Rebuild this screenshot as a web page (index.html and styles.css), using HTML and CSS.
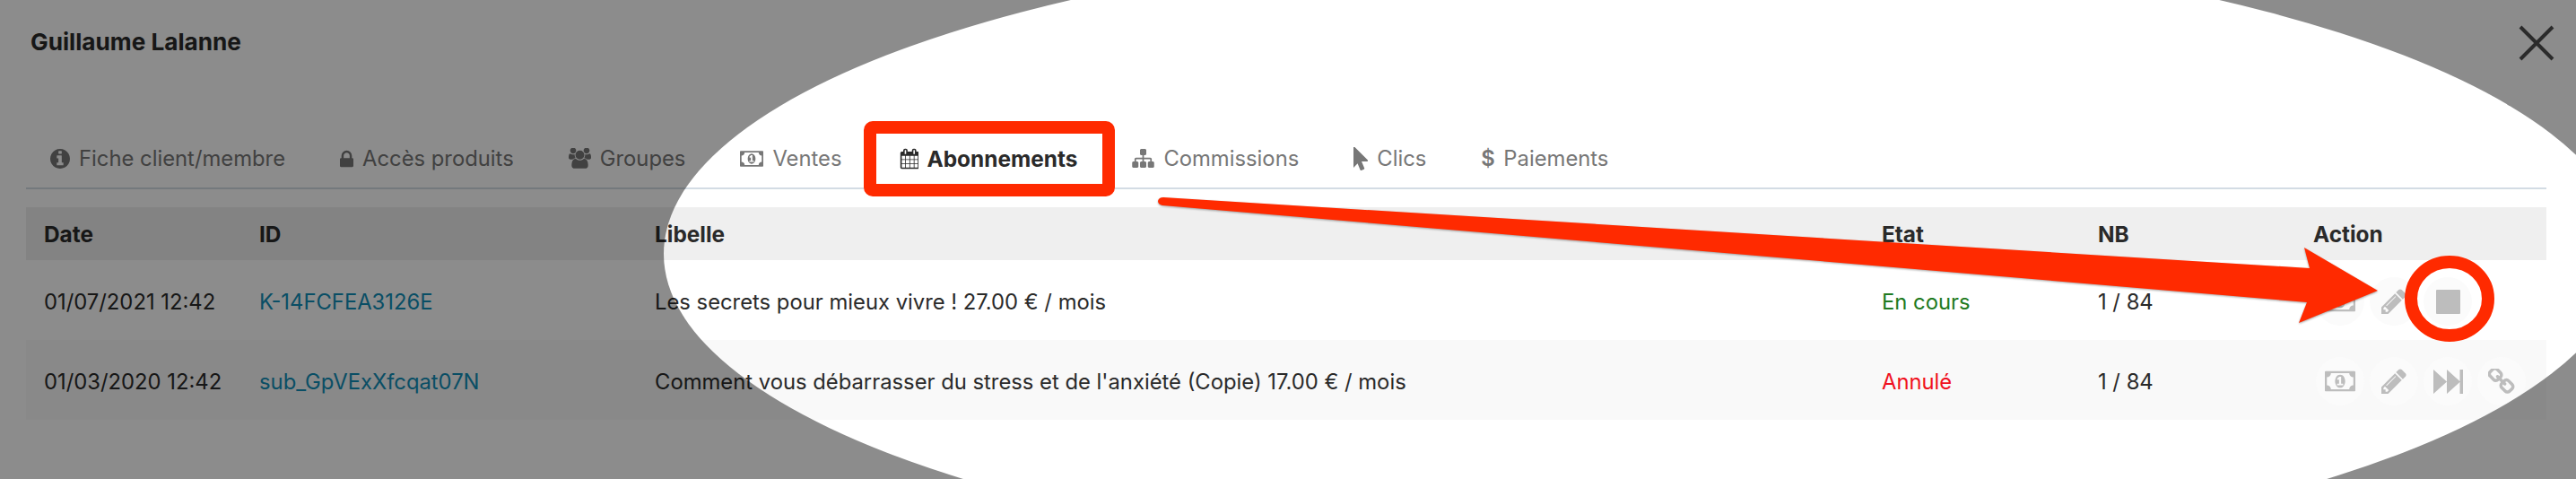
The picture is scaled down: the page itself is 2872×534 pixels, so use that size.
FILE: index.html
```html
<!DOCTYPE html>
<html lang="fr">
<head>
    <meta charset="UTF-8">
    <title>Guillaume Lalanne - Abonnements</title>
    <link rel="stylesheet" href="styles.css">
</head>
<body>
<div class="page">

    <svg class="sprites" aria-hidden="true">
        <symbol id="i-info" viewBox="128 128 1536 1536"><path d="M1152 1376v-160q0-14-9-23t-23-9h-96v-512q0-14-9-23t-23-9h-320q-14 0-23 9t-9 23v160q0 14 9 23t23 9h96v320h-96q-14 0-23 9t-9 23v160q0 14 9 23t23 9h448q14 0 23-9t9-23zm-128-896v-160q0-14-9-23t-23-9h-192q-14 0-23 9t-9 23v160q0 14 9 23t23 9h192q14 0 23-9t9-23zm640 416q0 209-103 385.500t-279.500 279.500-385.500 103-385.500-103-279.500-279.500-103-385.500 103-385.500 279.500-279.500 385.500-103 385.500 103 279.500 279.500 103 385.500z"/></symbol>
        <symbol id="i-lock" viewBox="320 128 1152 1408"><path d="M640 768h512v-192q0-106-75-181t-181-75-181 75-75 181v192zm832 96v576q0 40-28 68t-68 28h-960q-40 0-68-28t-28-68v-576q0-40 28-68t68-28h32v-192q0-184 132-316t316-132 316 132 132 316v192h32q40 0 68 28t28 68z"/></symbol>
        <symbol id="i-users" viewBox="0 128 1920 1664"><path d="M593 896q-162 5-265 128h-134q-82 0-138-40.500t-56-118.500q0-353 124-353 6 0 43.500 21t97.500 42.500 119 21.500q67 0 133-23-5 37-5 66 0 139 81 256zm1071 637q0 120-73 189.500t-194 69.500h-874q-121 0-194-69.500t-73-189.500q0-53 3.500-103.500t14-109 26.500-108.500 43-97.500 62-81 85.500-53.500 111.500-20q10 0 43 21.500t73 48 107 48 135 21.500 135-21.500 107-48 73-48 43-21.500q61 0 111.500 20t85.500 53.500 62 81 43 97.500 26.500 108.500 14 109 3.500 103.500zm-1024-1277q0 106-75 181t-181 75-181-75-75-181 75-181 181-75 181 75 75 181zm704 384q0 159-112.500 271.500t-271.500 112.500-271.500-112.500-112.500-271.500 112.500-271.500 271.500-112.500 271.500 112.500 112.500 271.500zm576 225q0 78-56 118.500t-138 40.500h-134q-103-123-265-128 81-117 81-256 0-29-5-66 66 23 133 23 59 0 119-21.500t97.500-42.500 43.500-21q124 0 124 353zm-128-609q0 106-75 181t-181 75-181-75-75-181 75-181 181-75 181 75 75 181z"/></symbol>
        <symbol id="i-money" viewBox="0 256 1920 1280"><path d="M768 1152h384v-96h-128v-448h-114l-148 137 77 80q42-37 55-57h2v288h-128v96zm512-256q0 70-21 142t-59.500 134-101.500 101-138 39-138-39-101.500-101-59.500-134-21-142 21-142 59.500-134 101.500-101 138-39 138 39 101.500 101 59.500 134 21 142zm512 256v-512q-106 0-181-75t-75-181h-1152q0 106-75 181t-181 75v512q106 0 181 75t75 181h1152q0-106 75-181t181-75zm128-832v1152q0 26-19 45t-45 19h-1792q-26 0-45-19t-19-45v-1152q0-26 19-45t45-19h1792q26 0 45 19t19 45z"/></symbol>
        <symbol id="i-calendar" viewBox="0 0 1664 1792"><path d="M192 1664h288v-288h-288v288zm352 0h320v-288h-320v288zm-352-352h288v-320h-288v320zm352 0h320v-320h-320v320zm-352-384h288v-288h-288v288zm736 736h320v-288h-320v288zm-384-736h320v-288h-320v288zm768 736h288v-288h-288v288zm-384-352h320v-320h-320v320zm-352-864v-288q0-13-9.500-22.500t-22.500-9.500h-64q-13 0-22.500 9.500t-9.500 22.500v288q0 13 9.500 22.500t22.500 9.500h64q13 0 22.500-9.500t9.500-22.500zm736 864h288v-320h-288v320zm-384-384h320v-288h-320v288zm384 0h288v-288h-288v288zm32-480v-288q0-13-9.500-22.500t-22.500-9.500h-64q-13 0-22.500 9.500t-9.500 22.500v288q0 13 9.500 22.500t22.500 9.500h64q13 0 22.500-9.500t9.500-22.500zm384-64v1280q0 52-38 90t-90 38h-1408q-52 0-90-38t-38-90v-1280q0-52 38-90t90-38h128v-96q0-66 47-113t113-47h64q66 0 113 47t47 113v96h384v-96q0-66 47-113t113-47h64q66 0 113 47t47 113v96h128q52 0 90 38t38 90z"/></symbol>
        <symbol id="i-sitemap" viewBox="0 128 1792 1536"><path d="M1792 1248v320q0 40-28 68t-68 28h-320q-40 0-68-28t-28-68v-320q0-40 28-68t68-28h96v-192h-512v192h96q40 0 68 28t28 68v320q0 40-28 68t-68 28h-320q-40 0-68-28t-28-68v-320q0-40 28-68t68-28h96v-192h-512v192h96q40 0 68 28t28 68v320q0 40-28 68t-68 28h-320q-40 0-68-28t-28-68v-320q0-40 28-68t68-28h96v-192q0-52 38-90t90-38h512v-192h-96q-40 0-68-28t-28-68v-320q0-40 28-68t68-28h320q40 0 68 28t28 68v320q0 40-28 68t-68 28h-96v192h512q52 0 90 38t38 90v192h96q40 0 68 28t28 68z"/></symbol>
        <symbol id="i-pointer" viewBox="384 128 1024 1664"><path d="M1389 1043q31 30 14 69-17 40-59 40h-382l201 476q10 25 0 49t-34 35l-177 75q-25 10-49 0t-35-34l-191-452-312 312q-19 19-45 19-12 0-24-5-40-17-40-59v-1504q0-42 40-59 12-5 24-5 27 0 45 19z"/></symbol>
        <symbol id="i-pencil" viewBox="128 128 1536 1536"><path d="M491 1536l91-91-235-235-91 91v107h128v128h107zm523-928q0-22-22-22-10 0-17 7l-542 542q-7 7-7 17 0 22 22 22 10 0 17-7l542-542q7-7 7-17zm-54-192l416 416-832 832h-416v-416zm683 96q0 53-37 90l-166 166-416-416 166-165q36-38 90-38 53 0 91 38l235 234q37 39 37 91z"/></symbol>
        <symbol id="i-next" viewBox="0 0 33 27"><path d="M0 0l15 13.500-15 13.500zM15 0l15 13.500-15 13.500zM29.500 0h3.500v27h-3.500z"/></symbol>
        <symbol id="i-stop" viewBox="0 0 27 27"><rect width="27" height="27" rx="1"/></symbol>
        <symbol id="i-link" viewBox="128 128 1584 1584"><path d="M1520 1216q0-40-28-68l-208-208q-28-28-68-28-42 0-72 32 3 3 19 18.500t21.500 21.500 15 19 13 25.500 3.500 27.500q0 40-28 68t-68 28q-15 0-27.500-3.500t-25.500-13-19-15-21.500-21.500-18.500-19q-33 31-33 73 0 40 28 68l206 207q27 27 68 27 40 0 68-26l147-146q28-28 28-67zm-703-705q0-40-28-68l-206-207q-28-28-68-28-39 0-68 27l-147 146q-28 28-28 67 0 40 28 68l208 208q27 27 68 27 42 0 72-31-3-3-19-18.500t-21.500-21.500-15-19-13-25.500-3.500-27.500q0-40 28-68t68-28q15 0 27.500 3.500t25.500 13 19 15 21.500 21.500 18.500 19q33-31 33-73zm895 705q0 120-85 203l-147 146q-83 83-203 83-121 0-204-85l-206-207q-83-83-83-203 0-123 88-209l-88-88q-86 88-208 88-120 0-204-84l-208-208q-84-84-84-204t85-203l147-146q83-83 203-83 121 0 204 85l206 207q83 83 83 203 0 123-88 209l88 88q86-88 208-88 120 0 204 84l208 208q84 84 84 204z"/></symbol>
    </svg>

    <div class="modal">
        <div class="modal-head">
            <h1 class="modal-title">Guillaume Lalanne</h1>
            <svg class="close" viewBox="0 0 40 40"><path d="M2 2l36 36M38 2l-36 36"/></svg>
        </div>

        <ul class="tabs">
            <li class="tab"><svg class="ico ico-info"><use href="#i-info"/></svg>Fiche client/membre</li>
            <li class="tab"><svg class="ico ico-lock"><use href="#i-lock"/></svg>Accès produits</li>
            <li class="tab"><svg class="ico ico-users"><use href="#i-users"/></svg>Groupes</li>
            <li class="tab"><svg class="ico ico-money"><use href="#i-money"/></svg>Ventes</li>
            <li class="tab active"><svg class="ico ico-calendar"><use href="#i-calendar"/></svg>Abonnements</li>
            <li class="tab"><svg class="ico ico-sitemap"><use href="#i-sitemap"/></svg>Commissions</li>
            <li class="tab"><svg class="ico ico-pointer"><use href="#i-pointer"/></svg>Clics</li>
            <li class="tab"><span class="ico-dollar">$</span>Paiements</li>
        </ul>

        <table class="subs">
            <thead>
                <tr>
                    <th class="col-date">Date</th>
                    <th class="col-id">ID</th>
                    <th class="col-label">Libelle</th>
                    <th class="col-state">Etat</th>
                    <th class="col-nb">NB</th>
                    <th>Action</th>
                </tr>
            </thead>
            <tbody>
                <tr>
                    <td>01/07/2021 12:42</td>
                    <td><a class="sub-link" href="#">K-14FCFEA3126E</a></td>
                    <td>Les secrets pour mieux vivre ! 27.00 € / mois</td>
                    <td class="state-on">En cours</td>
                    <td>1 / 84</td>
                    <td class="actions">
                        <span class="act"><svg class="act-money"><use href="#i-money"/></svg></span>
                        <span class="act"><svg class="act-pencil"><use href="#i-pencil"/></svg></span>
                        <span class="act"><svg class="act-stop"><use href="#i-stop"/></svg></span>
                    </td>
                </tr>
                <tr class="odd">
                    <td>01/03/2020 12:42</td>
                    <td><a class="sub-link" href="#">sub_GpVExXfcqat07N</a></td>
                    <td>Comment vous débarrasser du stress et de l'anxiété (Copie) 17.00 € / mois</td>
                    <td class="state-off">Annulé</td>
                    <td>1 / 84</td>
                    <td class="actions">
                        <span class="act"><svg class="act-money"><use href="#i-money"/></svg></span>
                        <span class="act"><svg class="act-pencil"><use href="#i-pencil"/></svg></span>
                        <span class="act"><svg class="act-next"><use href="#i-next"/></svg></span>
                        <span class="act"><svg class="act-link"><use href="#i-link"/></svg></span>
                    </td>
                </tr>
            </tbody>
        </table>
    </div>

    <!-- screenshot markup: dimmed area around an ellipse, then the red shapes -->
    <div class="spot"></div>
    <svg class="marks" viewBox="0 0 2872 534">
        <rect class="mark-line" x="970" y="142" width="266" height="70" rx="3"/>
        <ellipse class="mark-line" cx="2731" cy="333" rx="43" ry="41"/>
        <path class="mark-arrow" d="M1297 220L2575 299 2569 276 2651 324 2563 360 2572 337 1296 229Q1291 228 1291 224 1292 220 1297 220Z"/>
    </svg>

</div>
</body>
</html>
```

FILE: styles.css
```css
body {
    margin: 0;
    background: #fff;
    color: #2a2a2a;
    font-family: Inter, "Liberation Sans", sans-serif;
    font-size: 23.8px;
}

.page {
    position: relative;
    height: 100vh;
    overflow: hidden;
}

.sprites {
    position: absolute;
    width: 0;
    height: 0;
}

.modal {
    padding: 0 33px 0 29px;
}

.modal-head {
    display: flex;
    justify-content: space-between;
    align-items: center;
    height: 40px;
    padding: 28px 0 0 5px;
    margin-right: -9px;
}

.modal-title {
    margin: -3px 0 0;
    font-size: 26.2px;
    font-weight: 700;
}

.close {
    width: 40px;
    height: 40px;
    fill: none;
    stroke: #4f4f4f;
    stroke-width: 4;
}

/* Tabs */
.tabs {
    display: flex;
    align-items: center;
    height: 65px;
    margin: 76px 0 0;
    padding: 0 0 0 27px;
    list-style: none;
    border-bottom: 2px solid #d3dce4;
    color: #777;
}

.tab {
    display: flex;
    align-items: center;
    margin-right: 61px;
    white-space: nowrap;
}

.tab.active {
    margin-left: 3px;
    color: #2a2a2a;
    font-size: 24.4px;
    font-weight: 700;
}

.ico {
    margin-right: 10px;
    fill: currentColor;
}

.ico-info { width: 22px; height: 22px; }
.ico-lock { width: 15px; height: 20px; }
.ico-users { width: 25px; height: 24px; }
.ico-money { width: 26px; height: 18px; }
.ico-calendar { width: 21px; height: 24px; }
.ico-sitemap { width: 25px; height: 21px; }
.ico-pointer { width: 16px; height: 26px; }

.ico-dollar {
    margin-right: 12px;
    width: 13px;
    font-weight: 600;
}

/* Table */
.subs {
    width: 100%;
    margin-top: 20px;
    border-collapse: collapse;
    table-layout: fixed;
}

.subs th,
.subs td {
    box-sizing: border-box;
    padding: 0 0 0 20px;
    text-align: left;
}

.subs th {
    height: 59px;
    background: #efefef;
    font-size: 24.4px;
    font-weight: 700;
}

.subs td {
    height: 89px;
    padding-top: 3px;
}

.col-date { width: 240px; }
.col-id { width: 441px; }
.col-label { width: 1368px; }
.col-state { width: 241px; }
.col-nb { width: 240px; }

.odd td {
    background: #f9f9f9;
}

.sub-link {
    color: #128fb8;
    text-decoration: none;
}

.subs .state-on { color: #217a21; }
.subs .state-off { color: #f01020; }

.actions {
    white-space: nowrap;
}

.act {
    display: inline-flex;
    justify-content: center;
    align-items: center;
    width: 54px;
    height: 54px;
    margin-right: 6px;
    border-radius: 50%;
    background: #fbfbfb;
    vertical-align: middle;
    fill: #bdbdbd;
}

.subs .actions {
    padding-left: 23px;
    font-size: 0;
}

.act-money { width: 34px; height: 24px; }
.act-pencil { width: 28px; height: 28px; }
.act-next { width: 33px; height: 27px; }
.act-stop { width: 27px; height: 27px; }
.act-link { width: 30px; height: 29px; }

/* Annotations */
.spot {
    position: absolute;
    left: 740px;
    top: -66px;
    width: 2188px;
    height: 698px;
    border-radius: 50%;
    box-shadow: 0 0 0 3000px rgba(0, 0, 0, 0.45);
}

.marks {
    position: absolute;
    left: 0;
    top: 0;
    width: 2872px;
    height: 534px;
}

.mark-line {
    fill: none;
    stroke: #ff2a00;
    stroke-width: 14;
}

.mark-arrow {
    fill: #ff2a00;
    filter: drop-shadow(0 1px 1px rgba(0, 0, 0, 0.35));
}
```
